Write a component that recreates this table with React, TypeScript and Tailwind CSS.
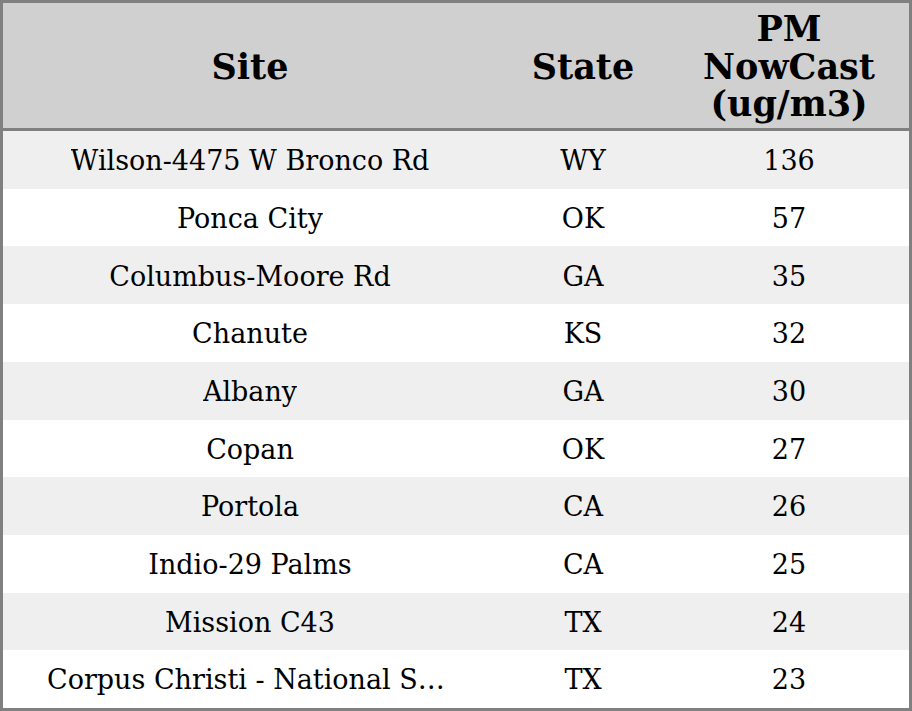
import React from "react";

type Row = { site: string; state: string; pm: number };

const rows: Row[] = [
  { site: "Wilson-4475 W Bronco Rd", state: "WY", pm: 136 },
  { site: "Ponca City", state: "OK", pm: 57 },
  { site: "Columbus-Moore Rd", state: "GA", pm: 35 },
  { site: "Chanute", state: "KS", pm: 32 },
  { site: "Albany", state: "GA", pm: 30 },
  { site: "Copan", state: "OK", pm: 27 },
  { site: "Portola", state: "CA", pm: 26 },
  { site: "Indio-29 Palms", state: "CA", pm: 25 },
  { site: "Mission C43", state: "TX", pm: 24 },
  { site: "Corpus Christi - National Seashore", state: "TX", pm: 23 },
];

const App = () => {
  return (
    <div className="w-[912px] h-[711px] border-[3px] border-[#808080] bg-white font-['DejaVu_Serif',serif] text-black flex flex-col">
      <div className="h-[125px] pt-[2px] bg-[#d0d0d0] grid grid-cols-[494px_172px_240px] items-center text-center font-bold text-[35px] leading-[37.5px]">
        <div>Site</div>
        <div>State</div>
        <div>
          PM
          <br />
          NowCast
          <br />
          (ug/m3)
        </div>
      </div>
      <div className="h-[3px] bg-[#808080]" />
      <div className="flex-1 flex flex-col">
        {rows.map((r, i) => (
          <div
            key={r.site}
            className={`flex-1 pt-[3px] grid grid-cols-[494px_172px_240px] items-center text-center text-[27px] ${
              i % 2 === 0 ? "bg-[#efefef]" : "bg-white"
            }`}
          >
            <div className="flex justify-center">
              <span className="block max-w-[406px] truncate">{r.site}</span>
            </div>
            <div>{r.state}</div>
            <div>{r.pm}</div>
          </div>
        ))}
      </div>
    </div>
  );
};

export default App;
